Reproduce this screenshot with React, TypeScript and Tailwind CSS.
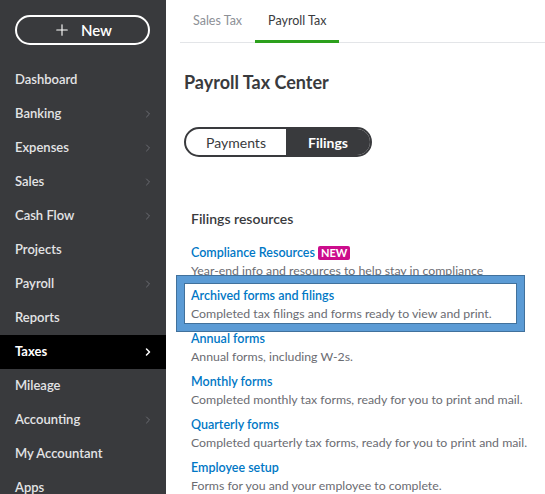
import React from 'react';
import { ChevronRight, Plus } from 'lucide-react';

const navItems = [
  { label: 'Dashboard', arrow: false },
  { label: 'Banking', arrow: true },
  { label: 'Expenses', arrow: true },
  { label: 'Sales', arrow: true },
  { label: 'Cash Flow', arrow: true },
  { label: 'Projects', arrow: false },
  { label: 'Payroll', arrow: true },
  { label: 'Reports', arrow: false },
  { label: 'Taxes', arrow: true, active: true },
  { label: 'Mileage', arrow: false },
  { label: 'Accounting', arrow: true },
  { label: 'My Accountant', arrow: false },
  { label: 'Apps', arrow: false },
];

const resources = [
  { title: 'Compliance Resources', desc: 'Year-end info and resources to help stay in compliance', isNew: true },
  { title: 'Archived forms and filings', desc: 'Completed tax filings and forms ready to view and print.' },
  { title: 'Annual forms', desc: 'Annual forms, including W-2s.' },
  { title: 'Monthly forms', desc: 'Completed monthly tax forms, ready for you to print and mail.' },
  { title: 'Quarterly forms', desc: 'Completed quarterly tax forms, ready for you to print and mail.' },
  { title: 'Employee setup', desc: 'Forms for you and your employee to complete.' },
];

export default function App() {
  return (
    <div className="flex w-[545px] h-[494px] overflow-hidden bg-white font-['Lato','Open_Sans',sans-serif]">
      {/* Sidebar */}
      <aside className="w-[166px] shrink-0 bg-[#393a3d] pt-[15px]">
        <button className="mx-[15px] w-[135px] h-[30px] rounded-full border-2 border-white text-white flex items-center justify-center gap-[10px] text-[15px] font-semibold">
          <Plus className="w-[18px] h-[18px]" strokeWidth={1.5} />
          New
        </button>
        <nav className="mt-[18px]">
          {navItems.map((item) => (
            <div
              key={item.label}
              className={`h-[34px] flex items-center justify-between pl-[15px] pr-[12px] text-[13px] ${
                item.active ? 'bg-black text-white font-bold' : 'text-[#e4e4e6] font-semibold'
              }`}
            >
              <span>{item.label}</span>
              {item.arrow && (
                <ChevronRight
                  className={`w-[12px] h-[12px] ${item.active ? 'text-white' : 'text-[#6b6c72]'}`}
                  strokeWidth={item.active ? 3 : 2}
                />
              )}
            </div>
          ))}
        </nav>
      </aside>

      {/* Main */}
      <main className="relative flex-1 pl-[14px]">
        <div className="flex h-[43px] border-b border-[#e3e5e8]">
          <div className="px-[13px] flex items-center text-[12.5px] text-[#8d9096]">Sales Tax</div>
          <div className="px-[13px] flex items-center text-[12.5px] text-[#393a3d] border-b-[3px] border-[#2ca01c] -mb-px pt-[3px]">
            Payroll Tax
          </div>
        </div>

        <h1 className="ml-[4px] mt-[27px] text-[18px] font-bold text-[#393a3d] leading-[24px]">Payroll Tax Center</h1>

        <div className="ml-[4px] mt-[33px] flex w-[188px] h-[30px] rounded-full border-2 border-[#393a3d] overflow-hidden">
          <div className="w-[100px] flex items-center justify-center text-[14px] text-[#393a3d]">Payments</div>
          <div className="flex-1 bg-[#393a3d] flex items-center justify-center text-[14px] font-bold text-white">Filings</div>
        </div>

        <div className="ml-[11px] mt-[52px]">
          <h2 className="text-[14px] font-semibold text-[#393a3d] leading-[20px]">Filings resources</h2>
          <div className="mt-[15px] flex flex-col gap-[7px]">
            {resources.map((r) => (
              <div key={r.title} className="leading-[18px]">
                <div className="flex items-center gap-[3px]">
                  <span className="text-[12.5px] font-semibold text-[#0077c5]">{r.title}</span>
                  {r.isNew && (
                    <span className="px-[3px] rounded-[2px] bg-[#cc0c8c] text-white text-[11px] font-bold leading-[14px]">NEW</span>
                  )}
                </div>
                <div className="text-[12.3px] text-[#6b6c72]">{r.desc}</div>
              </div>
            ))}
          </div>
        </div>

        {/* highlight annotation */}
        <div className="absolute left-[11px] top-[276px] w-[347px] h-[55px] border-[7px] border-[#5b9bd5] outline outline-1 outline-[#41719c] pointer-events-none">
          <div className="w-full h-full border border-[#41719c]" />
        </div>
      </main>
    </div>
  );
}
